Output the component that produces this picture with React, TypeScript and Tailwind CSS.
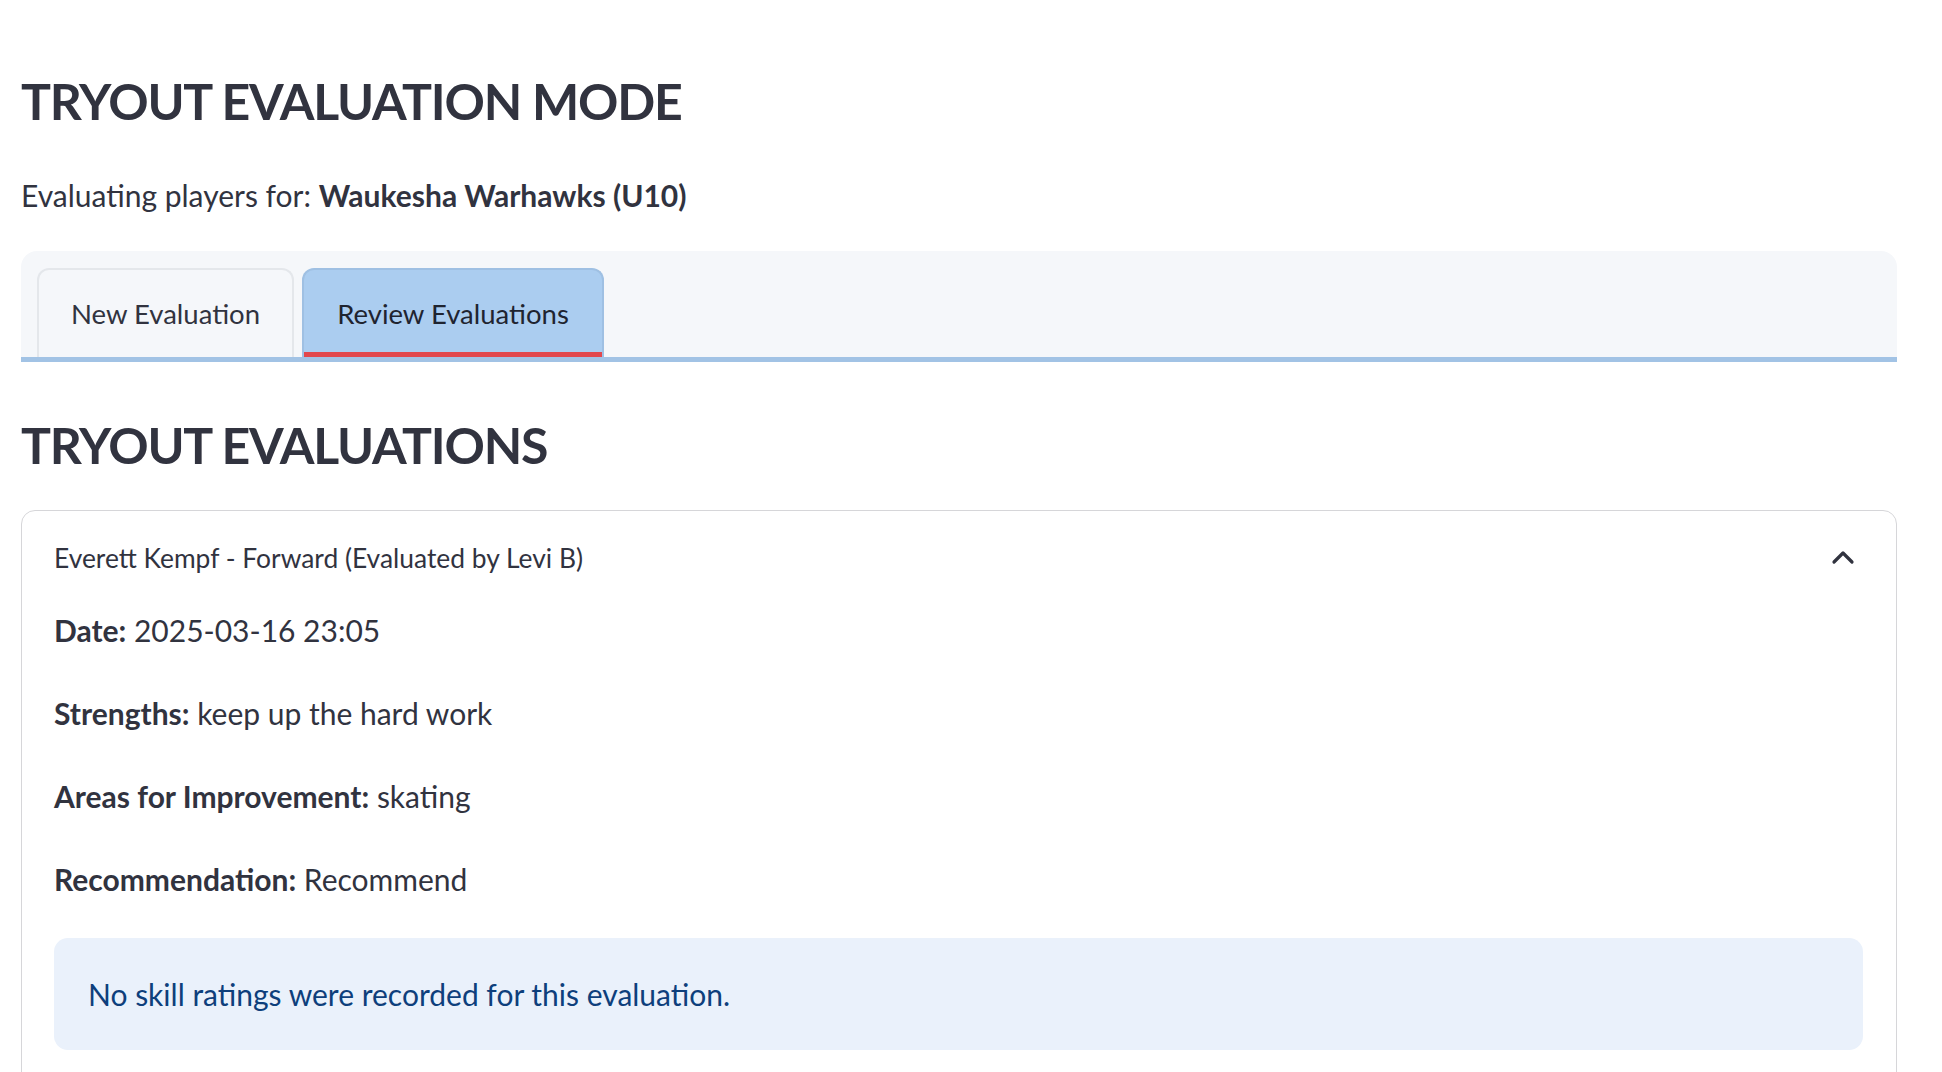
import React from 'react'

function ChevronUp() {
  return (
    <svg width="24" height="16" viewBox="0 0 24 16" fill="none">
      <polyline points="3,13 12,4 21,13" stroke="#31333f" strokeWidth="3.2" strokeLinecap="round" strokeLinejoin="round" />
    </svg>
  )
}

function Row({ label, value }: { label: string; value: string }) {
  return (
    <div className="h-[83px] flex items-center text-[30px] leading-[40px]">
      <span className="font-bold">{label}</span>
      <span>&nbsp;{value}</span>
    </div>
  )
}

export default function App() {
  return (
    <div className="min-h-screen bg-white text-[#31333f] font-['Lato',sans-serif] pl-[21px] pr-[45px]">
      {/* Header */}
      <h1 className="pt-[64px] text-[50px] leading-[74px] font-bold tracking-[-1.2px]">TRYOUT EVALUATION MODE</h1>
      <p className="mt-[37px] text-[30px] leading-[40px]">
        Evaluating players for: <span className="font-bold">Waukesha Warhawks (U10)</span>
      </p>

      {/* Tabs */}
      <div className="mt-[36px] bg-[#f5f7fa] rounded-t-[16px] pt-[17px] pl-[16px] border-b-[5px] border-[#a2c3e5] flex gap-[8px]">
        <div className="w-[257px] h-[89px] flex items-center justify-center rounded-t-[12px] border-2 border-b-0 border-[#e4e7eb] text-[27.5px]">
          New Evaluation
        </div>
        <div className="relative w-[302px] h-[89px] flex items-center justify-center rounded-t-[12px] border-2 border-b-0 border-[#9fc0e3] bg-[#abcdf0] text-[27.5px] text-[#1f2430]">
          Review Evaluations
          <div className="absolute left-0 right-0 bottom-0 h-[5px] bg-[#e2474c]" />
        </div>
      </div>

      <h2 className="mt-[46px] text-[50px] leading-[74px] font-bold tracking-[-1.2px]">TRYOUT EVALUATIONS</h2>

      {/* Expander */}
      <div className="mt-[28px] border-[1.5px] border-[#d6d6d9] rounded-[14px] pl-[32px] pr-[33px] pb-[40px]">
        <div className="h-[77px] pt-[18px] flex items-center justify-between">
          <span className="text-[26.4px]">Everett Kempf - Forward (Evaluated by Levi B)</span>
          <span className="mr-[8px] -mt-[4px]">
            <ChevronUp />
          </span>
        </div>
        <Row label="Date:" value="2025-03-16 23:05" />
        <Row label="Strengths:" value="keep up the hard work" />
        <Row label="Areas for Improvement:" value="skating" />
        <Row label="Recommendation:" value="Recommend" />
        <div className="mt-[18px] h-[112px] rounded-[14px] bg-[#eaf1fb] pl-[34px] flex items-center text-[30px] text-[#0e3f7c]">
          No skill ratings were recorded for this evaluation.
        </div>
      </div>
    </div>
  )
}
